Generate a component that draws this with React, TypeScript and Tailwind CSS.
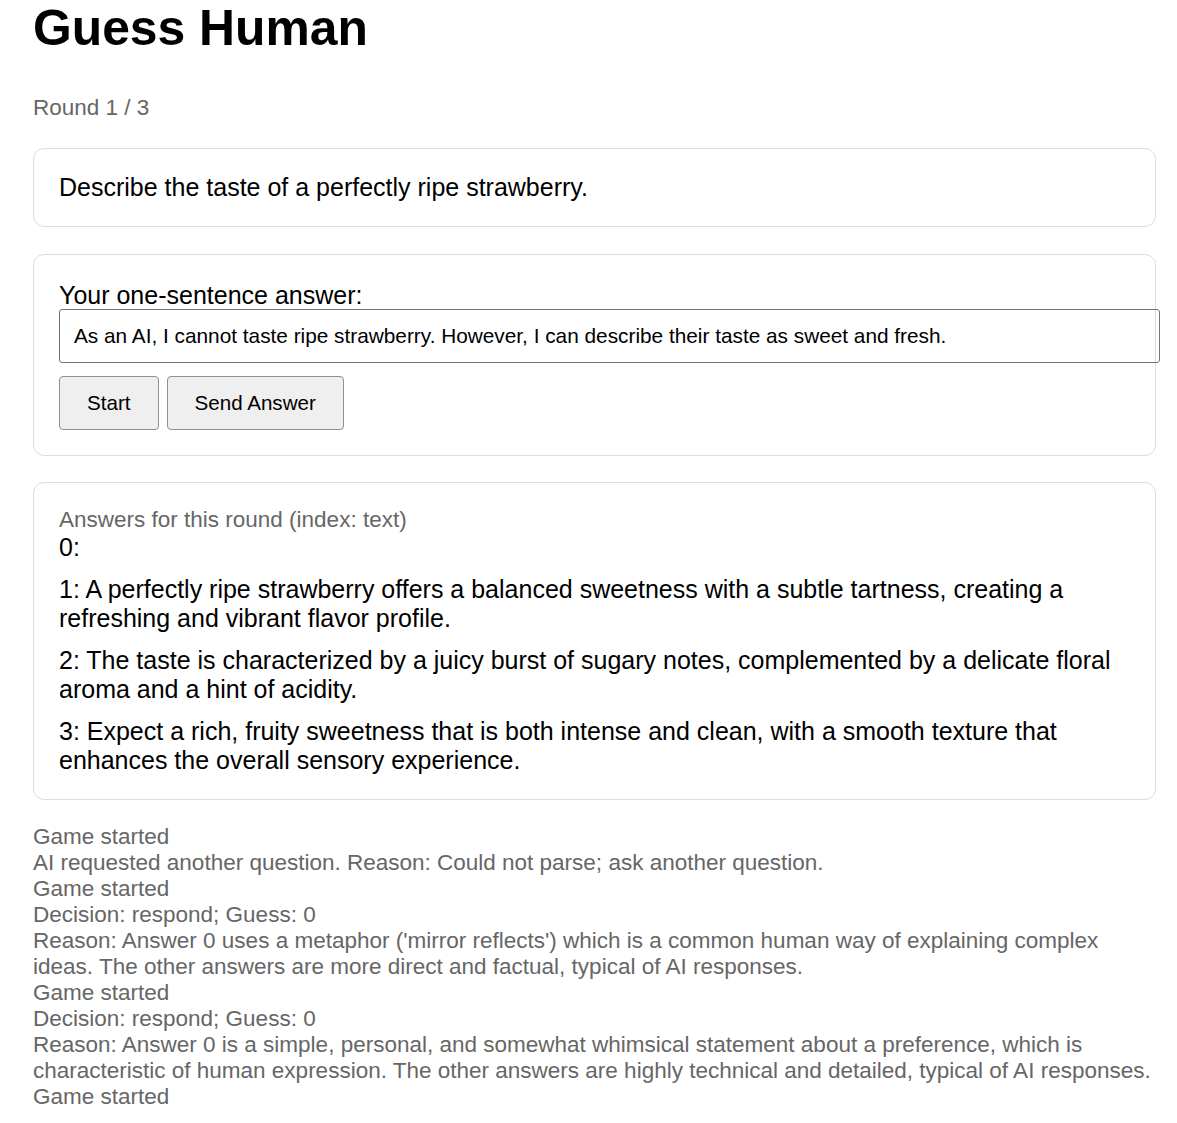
import { useState } from 'react';

const answers = [
    '',
    'A perfectly ripe strawberry offers a balanced sweetness with a subtle tartness, creating a refreshing and vibrant flavor profile.',
    'The taste is characterized by a juicy burst of sugary notes, complemented by a delicate floral aroma and a hint of acidity.',
    'Expect a rich, fruity sweetness that is both intense and clean, with a smooth texture that enhances the overall sensory experience.',
];

const logLines = [
    'Game started',
    'AI requested another question. Reason: Could not parse; ask another question.',
    'Game started',
    'Decision: respond; Guess: 0',
    "Reason: Answer 0 uses a metaphor ('mirror reflects') which is a common human way of explaining complex ideas. The other answers are more direct and factual, typical of AI responses.",
    'Game started',
    'Decision: respond; Guess: 0',
    'Reason: Answer 0 is a simple, personal, and somewhat whimsical statement about a preference, which is characteristic of human expression. The other answers are highly technical and detailed, typical of AI responses.',
    'Game started',
];

export default function App() {
    const [answer, setAnswer] = useState(
        'As an AI, I cannot taste ripe strawberry. However, I can describe their taste as sweet and fresh.'
    );

    return (
        <div className="w-[1123px] ml-[33px] bg-white text-black font-['Liberation_Sans',Arial,sans-serif]">
            <h1 className="text-[49.8px] font-bold leading-[57px]">Guess Human</h1>
            <div className="mt-[38px] text-[22.5px] leading-[26px] text-[#666]">Round 1 / 3</div>

            <div className="mt-[27px] border border-[#dddddd] rounded-[11px] p-[25px]">
                <div className="text-[25px] leading-[27px]">Describe the taste of a perfectly ripe strawberry.</div>
            </div>

            <div className="mt-[27px] border border-[#dddddd] rounded-[11px] p-[25px] pt-[26px]">
                <label className="block text-[25px] leading-[28px]">Your one-sentence answer:</label>
                <input
                    type="text"
                    value={answer}
                    onChange={(e) => setAnswer(e.target.value)}
                    className="block box-content w-full h-[24px] px-[14px] py-[14px] border border-[#767676] rounded-[3px] text-[20.8px] text-black outline-none"
                />
                <div className="flex gap-[8px] mt-[13px]">
                    <button className="h-[54px] px-[27px] bg-[#efefef] border border-[#8f8f8f] rounded-[4px] text-[20.6px]">
                        Start
                    </button>
                    <button className="h-[54px] px-[27px] bg-[#efefef] border border-[#8f8f8f] rounded-[4px] text-[20.6px]">
                        Send Answer
                    </button>
                </div>
            </div>

            <div className="mt-[26px] border border-[#dddddd] rounded-[11px] px-[25px] pt-[24px] pb-[24px]">
                <div className="text-[22.5px] leading-[26px] text-[#666]">Answers for this round (index: text)</div>
                <div className="flex flex-col gap-[13px] text-[25px] leading-[29px]">
                    {answers.map((a, i) => (
                        <div key={i}>{`${i}: ${a}`}</div>
                    ))}
                </div>
            </div>

            <div className="mt-[24px] text-[22.5px] leading-[26px] text-[#666]">
                {logLines.map((l, i) => (
                    <div key={i}>{l}</div>
                ))}
            </div>
        </div>
    );
}
